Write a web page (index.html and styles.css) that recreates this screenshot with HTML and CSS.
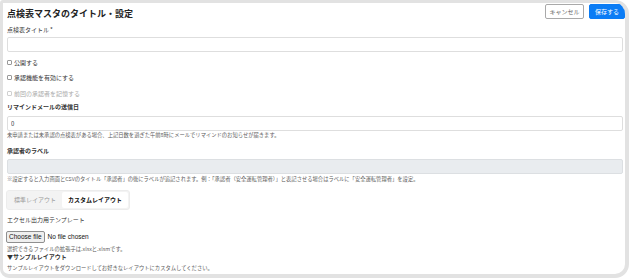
FILE: index.html
```html
<!DOCTYPE html>
<html lang="ja">
<head>
    <meta charset="UTF-8">
    <meta name="viewport" content="width=device-width, initial-scale=1.0">
    <title>点検表マスタのタイトル・設定</title>
    <link rel="stylesheet" href="styles.css">
</head>
<body>
    <div class="frame">
        <div class="header">
            <h1 class="title">点検表マスタのタイトル・設定</h1>
            <div class="actions">
                <button class="btn btnCancel">キャンセル</button>
                <button class="btn btnSave">保存する</button>
            </div>
        </div>

        <label class="label labelTitle">点検表タイトル<span class="req">*</span></label>
        <input type="text" class="input inputTitle">

        <label class="check check1"><input type="checkbox"><span>公開する</span></label>
        <label class="check check2"><input type="checkbox"><span>承認機能を有効にする</span></label>
        <label class="check check3 disabled"><input type="checkbox" disabled><span>前回の承認者を記憶する</span></label>

        <label class="label bold labelRemind">リマインドメールの送信日</label>
        <input type="text" class="input inputRemind" value="0">
        <p class="help help1">未申請または未承認の点検表がある場合、上記日数を過ぎた午前8時にメールでリマインドのお知らせが届きます。</p>

        <label class="label bold labelApprover">承認者のラベル</label>
        <input type="text" class="input inputApprover" disabled>
        <p class="help help2">※設定すると入力画面とCSVのタイトル「承認者」の後にラベルが追記されます。例：「承認者（安全運転管理者）」と表記させる場合はラベルに「安全運転管理者」を設定。</p>

        <div class="tabs">
            <span class="tab">標準レイアウト</span>
            <span class="tab active">カスタムレイアウト</span>
        </div>

        <label class="label labelExcel">エクセル出力用テンプレート</label>
        <div class="fileRow">
            <button class="fileBtn">Choose file</button>
            <span class="fileName">No file chosen</span>
        </div>
        <p class="help help3">選択できるファイルの拡張子は.xlsxと.xlsmです。</p>

        <div class="sample">▼サンプルレイアウト</div>
        <p class="help help4">サンプルレイアウトをダウンロードしてお好きなレイアウトにカスタムしてください。</p>
    </div>
</body>
</html>
```

FILE: styles.css
```css
* {
    box-sizing: border-box;
}
html,body {
    margin: 0;
    background: #fff;
}
body {
    font-family: "Noto Sans CJK JP", "Noto Sans", sans-serif;
    color: #333;
}
.frame {
    width: 629px;
    height: 278px;
    border: solid #e2e2e2;
    border-width: 3px 4px 4px 3px;
    border-radius: 3px 14px 14px 9px;
    overflow: hidden;
    padding: 0 2px 0 4px;
}

/* header */
.header {
    display: flex;
    justify-content: space-between;
    align-items: flex-start;
    height: 16px;
    padding-top: 1px;
    margin-right: -2px;
}
.title {
    margin: 4px 0 0 0;
    font-size: 9px;
    line-height: 11px;
    font-weight: bold;
    color: #222;
}
.actions {
    display: flex;
    gap: 5px;
}
.btn {
    height: 15px;
    padding: 0;
    font-family: inherit;
    font-size: 6px;
    line-height: 13px;
    border: 1px solid;
    border-radius: 2px;
}
.btnCancel {
    width: 39px;
    background: #fff;
    border-color: #a9a9a9;
    color: #666;
}
.btnSave {
    width: 36px;
    background: #0b7cf5;
    border-color: #0b7cf5;
    color: #fff;
}

/* fields */
.label {
    display: block;
    font-size: 6px;
    line-height: 8px;
    color: #333;
}
.bold {
    font-weight: bold;
}
.req {
    margin-left: 1px;
}
.input {
    display: block;
    width: 100%;
    height: 15px;
    margin: 0;
    padding: 0 3px;
    border: 1px solid #dedede;
    border-radius: 2px;
    font-family: inherit;
    font-size: 6px;
    color: #333;
    outline: none;
}
.input:disabled {
    background: #e9ecef;
    border-color: #dcdfe2;
}
.help {
    margin: 0;
    font-size: 5.3px;
    line-height: 7px;
    color: #5c5c5c;
    white-space: nowrap;
}

.labelTitle { margin-top: 7px; }
.inputTitle { margin-top: 3px; }

.check {
    display: flex;
    align-items: center;
    gap: 2px;
    height: 8px;
    font-size: 6px;
    color: #333;
}
.check input {
    appearance: none;
    width: 5px;
    height: 5px;
    margin: 0;
    border: 1px solid #999;
    border-radius: 1px;
    background: #fff;
}
.check.disabled {
    color: #aaa;
}
.check.disabled input {
    border-color: #d0d0d0;
}
.check1 { margin-top: 6px; }
.check2 { margin-top: 7px; }
.check3 { margin-top: 8px; }

.labelRemind { margin-top: 6px; }
.inputRemind { margin-top: 5px; }
.help1 { margin-top: 0.5px; }

.labelApprover { margin-top: 8.5px; }
.inputApprover { margin-top: 4px; }
.help2 { margin-top: 2px; }

/* layout tabs */
.tabs {
    display: inline-flex;
    margin-top: 5px;
    margin-left: -1px;
    padding: 1px;
    height: 20px;
    background: #f3f3f3;
    border: 1px solid #ececec;
    border-radius: 3px;
}
.tab {
    display: flex;
    align-items: center;
    padding: 0 6px;
    font-size: 6px;
    color: #999;
    border-radius: 2px;
}
.tab.active {
    background: #fff;
    color: #111;
    font-weight: bold;
}

.labelExcel { margin-top: 6px; }
.fileRow {
    display: flex;
    align-items: center;
    margin-top: 7px;
    height: 12px;
    font-family: "Liberation Sans", Arial, sans-serif;
}
.fileBtn {
    height: 12px;
    margin-left: -1px;
    padding: 0 2px;
    font-family: inherit;
    font-size: 6.5px;
    color: #111;
    background: #efefef;
    border: 1px solid #8f8f8f;
    border-radius: 2px;
}
.fileName {
    margin-left: 3px;
    font-size: 6.5px;
    color: #111;
}
.help3 { margin-top: 3px; }
.sample {
    margin-top: 0;
    font-size: 6px;
    line-height: 8px;
    font-weight: bold;
    color: #333;
}
.help4 { margin-top: 4.5px; }
```
